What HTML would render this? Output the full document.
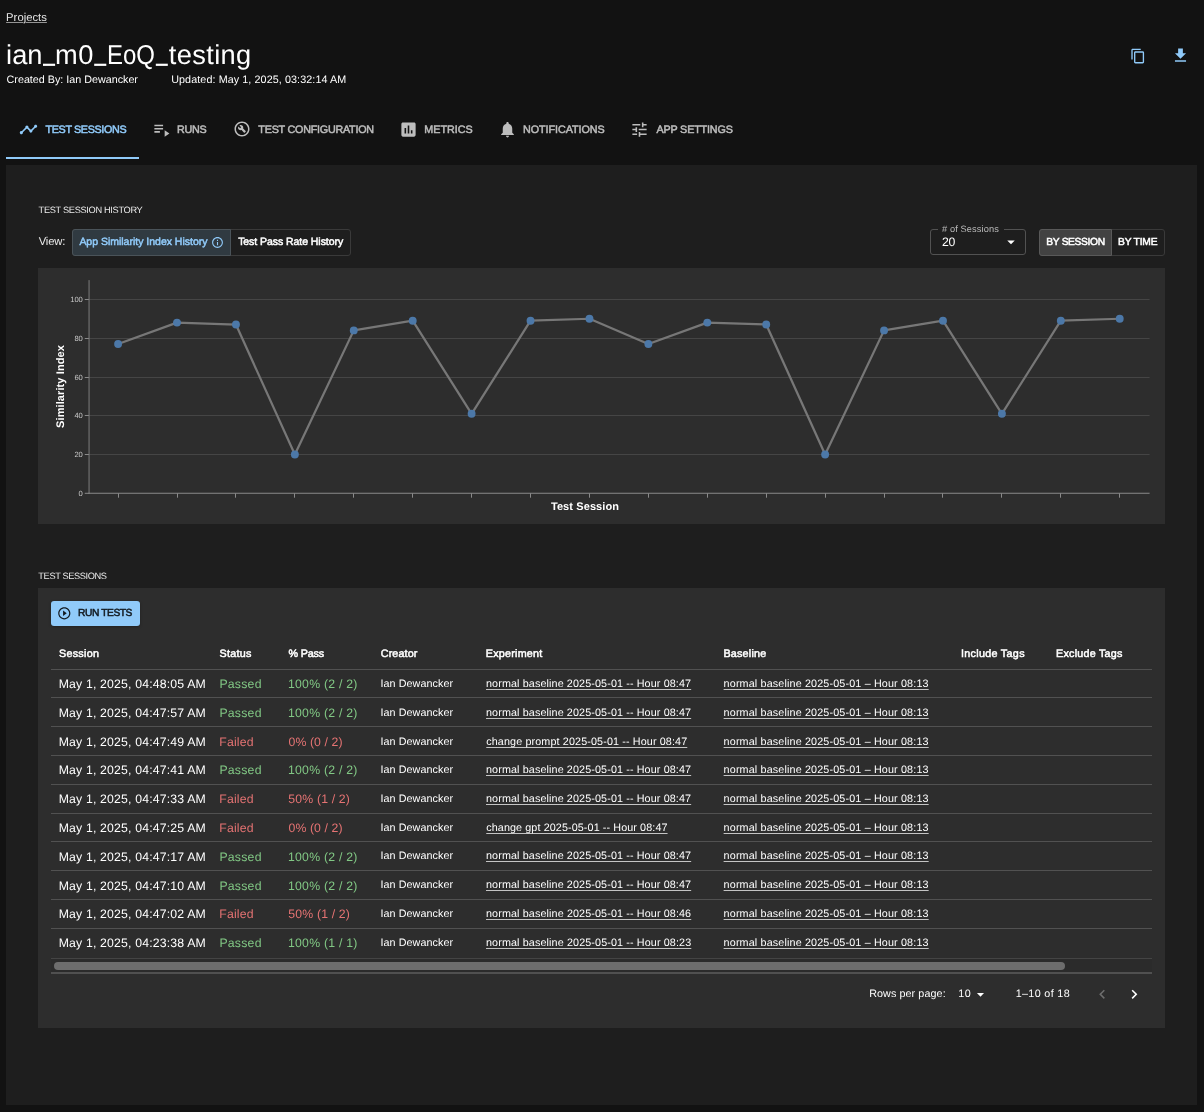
<!DOCTYPE html>
<html lang="en">
<head>
<meta charset="utf-8">
<title>ian_m0_EoQ_testing - Test Sessions</title>
<style>
html,body{margin:0;padding:0;background:#121212;}
body{width:1204px;height:1112px;position:relative;overflow:hidden;font-family:"Liberation Sans",sans-serif;color:#fff;}
#app{position:absolute;left:0;top:0;width:1204px;height:1112px;will-change:transform;}
.abs{position:absolute;display:block;}
.t{position:absolute;white-space:pre;margin:0;font-weight:400;font-style:normal;font-family:"Liberation Sans",sans-serif;text-rendering:geometricPrecision;}
a.t{cursor:pointer;}
svg text{font-family:"Liberation Sans",sans-serif;text-rendering:geometricPrecision;}
</style>
</head>
<body>
<div id="app">
<header>
<svg class="abs" style="left:1129.7px;top:47.7px" width="16.1" height="16.1" viewBox="0 0 24 24"><path fill="#90caf9" d="M16 1H4c-1.1 0-2 .9-2 2v14h2V3h12V1zm3 4H8c-1.1 0-2 .9-2 2v14c0 1.1.9 2 2 2h11c1.1 0 2-.9 2-2V7c0-1.1-.9-2-2-2zm0 16H8V7h11v14z"/></svg>
<svg class="abs" style="left:1170.9px;top:45.7px" width="19" height="19" viewBox="0 0 24 24"><path fill="#90caf9" d="M19 9h-4V3H9v6H5l7 7 7-7zM5 18v2h14v-2H5z"/></svg>
<svg class="abs" style="left:0;top:60px" width="260" height="8" viewBox="0 60 260 8"><rect x="43.0" y="63.7" width="12.1" height="2.2" fill="#fff"/><rect x="94.2" y="63.7" width="12.1" height="2.2" fill="#fff"/><rect x="155.8" y="63.7" width="12.0" height="2.2" fill="#fff"/></svg>
<a class="t" style="left:6.08px;top:10px;font-size:11.25px;line-height:16px;letter-spacing:0.025px;color:#e6e6e6;text-decoration:underline;text-underline-offset:0.5px;text-decoration-thickness:1px;text-decoration-color:rgba(255,255,255,.55);">Projects</a>
<b class="t" style="left:6.05px;top:36px;font-size:27.25px;line-height:38px;letter-spacing:0.045px;color:#ffffff;">ian</b>
<b class="t" style="left:55.1px;top:36px;font-size:27.25px;line-height:38px;letter-spacing:0.487px;color:#ffffff;">m0</b>
<b class="t" style="left:106.96px;top:36px;font-size:27.25px;line-height:38px;transform:scaleX(0.8803);transform-origin:0 0;color:#ffffff;">EoQ</b>
<b class="t" style="left:168.77px;top:36px;font-size:27.25px;line-height:38px;letter-spacing:0.370px;color:#ffffff;">testing</b>
<span class="t" style="left:6.59px;top:73px;font-size:10.75px;line-height:15px;letter-spacing:-0.004px;color:#ffffff;">Created By: Ian Dewancker</span>
<span class="t" style="left:171.2px;top:73px;font-size:10.75px;line-height:15px;letter-spacing:0.092px;color:#ffffff;">Updated: May 1, 2025, 03:32:14 AM</span>
</header>
<nav>
<div class="abs" style="left:6px;top:157px;width:133px;height:2px;background:#90caf9"></div>
<svg class="abs" style="left:19.1px;top:120.1px" width="19" height="19" viewBox="0 0 24 24"><path fill="#90caf9" d="M23 8c0 1.1-.9 2-2 2-.18 0-.35-.02-.51-.07l-3.56 3.55c.05.16.07.34.07.52 0 1.1-.9 2-2 2s-2-.9-2-2c0-.18.02-.36.07-.52l-2.55-2.55c-.16.05-.34.07-.52.07s-.36-.02-.52-.07l-4.55 4.56c.05.16.07.33.07.51 0 1.1-.9 2-2 2s-2-.9-2-2 .9-2 2-2c.18 0 .35.02.51.07l4.56-4.55C8.02 9.36 8 9.18 8 9c0-1.1.9-2 2-2s2 .9 2 2c0 .18-.02.36-.07.52l2.55 2.55c.16-.05.34-.07.52-.07s.36.02.52.07l3.55-3.56C19.02 8.35 19 8.18 19 8c0-1.1.9-2 2-2s2 .9 2 2z"/></svg>
<svg class="abs" style="left:152.4px;top:119.8px" width="19" height="19" viewBox="0 0 24 24"><path fill="#bdbdbd" d="M3 10h11v2H3zm0-4h11v2H3zm0 8h7v2H3zm13-1v8l6-4z"/></svg>
<svg class="abs" style="left:233px;top:120.4px" width="18" height="18" viewBox="0 0 24 24"><path fill="#bdbdbd" d="M12 2C6.48 2 2 6.48 2 12s4.48 10 10 10 10-4.48 10-10S17.52 2 12 2zm0 18c-4.41 0-8-3.59-8-8s3.59-8 8-8 8 3.59 8 8-3.59 8-8 8zM13.49 11.38c.43-1.22.17-2.64-.81-3.62-1.11-1.11-2.79-1.3-4.1-.59l2.35 2.35-1.41 1.41-2.35-2.35c-.71 1.32-.52 2.99.59 4.1.98.98 2.4 1.24 3.62.81l3.41 3.41c.2.2.51.2.71 0l1.4-1.4c.2-.2.2-.51 0-.71l-3.41-3.41z"/></svg>
<svg class="abs" style="left:398.9px;top:119.9px" width="19" height="19" viewBox="0 0 24 24"><path fill="#bdbdbd" d="M19 3H5c-1.1 0-2 .9-2 2v14c0 1.1.9 2 2 2h14c1.1 0 2-.9 2-2V5c0-1.1-.9-2-2-2zM9 17H7v-7h2v7zm4 0h-2V7h2v10zm4 0h-2v-4h2v4z"/></svg>
<svg class="abs" style="left:497.9px;top:120.1px" width="19" height="19" viewBox="0 0 24 24"><path fill="#bdbdbd" d="M12 22c1.1 0 2-.9 2-2h-4c0 1.1.89 2 2 2zm6-6v-5c0-3.07-1.64-5.64-4.5-6.32V4c0-.83-.67-1.5-1.5-1.5s-1.5.67-1.5 1.5v.68C7.63 5.36 6 7.92 6 11v5l-2 2v1h16v-1l-2-2z"/></svg>
<svg class="abs" style="left:629.9px;top:120.2px" width="19" height="19" viewBox="0 0 24 24"><path fill="#bdbdbd" d="M3 17v2h6v-2H3zM3 5v2h10V5H3zm10 16v-2h8v-2h-8v-2h-2v6h2zM7 9v2H3v2h4v2h2V9H7zm14 4v-2H11v2h10zm-6-4h2V7h4V5h-4V3h-2v6z"/></svg>
<span class="t" style="left:45.53px;top:123px;font-size:10.75px;line-height:15px;letter-spacing:-0.349px;color:#90caf9;-webkit-text-stroke:0.5px currentColor;">TEST SESSIONS</span>
<span class="t" style="left:177.08px;top:123px;font-size:10.75px;line-height:15px;letter-spacing:-0.277px;color:#bdbdbd;-webkit-text-stroke:0.5px currentColor;">RUNS</span>
<span class="t" style="left:258.37px;top:123px;font-size:10.75px;line-height:15px;letter-spacing:-0.231px;color:#bdbdbd;-webkit-text-stroke:0.5px currentColor;">TEST CONFIGURATION</span>
<span class="t" style="left:424.33px;top:123px;font-size:10.75px;line-height:15px;letter-spacing:-0.022px;color:#bdbdbd;-webkit-text-stroke:0.5px currentColor;">METRICS</span>
<span class="t" style="left:523px;top:123px;font-size:10.75px;line-height:15px;letter-spacing:-0.041px;color:#bdbdbd;-webkit-text-stroke:0.5px currentColor;">NOTIFICATIONS</span>
<span class="t" style="left:656.43px;top:123px;font-size:10.75px;line-height:15px;letter-spacing:-0.150px;color:#bdbdbd;-webkit-text-stroke:0.5px currentColor;">APP SETTINGS</span>
</nav>
<main>
<div class="abs" style="left:6px;top:165px;width:1191px;height:940px;background:#1e1e1e"></div>
<section id="test-session-history">
<div class="abs" style="left:72px;top:229px;width:279px;height:27px;border:1px solid #3a3a3a;border-radius:3px;box-sizing:border-box"></div>
<div class="abs" style="left:72px;top:229px;width:159px;height:27px;background:#303a41;border:1px solid #4a5359;border-radius:3px 0 0 3px;box-sizing:border-box"></div>
<div class="abs" style="left:930px;top:229px;width:96px;height:26px;border:1px solid #525252;border-radius:3px;box-sizing:border-box"></div>
<div class="abs" style="left:938px;top:228px;width:66px;height:4px;background:#1e1e1e"></div>
<div class="abs" style="left:1039px;top:229px;width:126px;height:27px;border:1px solid #3a3a3a;border-radius:3px;box-sizing:border-box"></div>
<div class="abs" style="left:1039px;top:229px;width:73px;height:27px;background:#424242;border:1px solid #595959;border-radius:3px 0 0 3px;box-sizing:border-box"></div>
<div class="abs" style="left:38px;top:268px;width:1127px;height:256px;background:#2d2d2d"></div>
<svg class="abs" style="left:0;top:0" width="1204" height="540" viewBox="0 0 1204 540">
<line x1="84.75" x2="89.05" y1="493.3" y2="493.3" stroke="#8a8a8a" stroke-width="1"/>
<text x="82.85" y="495.95" text-anchor="end" font-size="7.6" fill="#c8c8c8">0</text>
<line x1="89.05" x2="1149.6" y1="454.5" y2="454.5" stroke="#454545" stroke-width="1"/>
<line x1="84.75" x2="89.05" y1="454.5" y2="454.5" stroke="#8a8a8a" stroke-width="1"/>
<text x="82.85" y="457.15" text-anchor="end" font-size="7.6" fill="#c8c8c8">20</text>
<line x1="89.05" x2="1149.6" y1="415.5" y2="415.5" stroke="#454545" stroke-width="1"/>
<line x1="84.75" x2="89.05" y1="415.5" y2="415.5" stroke="#8a8a8a" stroke-width="1"/>
<text x="82.85" y="418.15" text-anchor="end" font-size="7.6" fill="#c8c8c8">40</text>
<line x1="89.05" x2="1149.6" y1="377.5" y2="377.5" stroke="#454545" stroke-width="1"/>
<line x1="84.75" x2="89.05" y1="377.5" y2="377.5" stroke="#8a8a8a" stroke-width="1"/>
<text x="82.85" y="380.15" text-anchor="end" font-size="7.6" fill="#c8c8c8">60</text>
<line x1="89.05" x2="1149.6" y1="338.5" y2="338.5" stroke="#454545" stroke-width="1"/>
<line x1="84.75" x2="89.05" y1="338.5" y2="338.5" stroke="#8a8a8a" stroke-width="1"/>
<text x="82.85" y="341.15" text-anchor="end" font-size="7.6" fill="#c8c8c8">80</text>
<line x1="89.05" x2="1149.6" y1="299.5" y2="299.5" stroke="#454545" stroke-width="1"/>
<line x1="84.75" x2="89.05" y1="299.5" y2="299.5" stroke="#8a8a8a" stroke-width="1"/>
<text x="82.85" y="302.15" text-anchor="end" font-size="7.6" fill="#c8c8c8">100</text>
<line x1="89.05" x2="89.05" y1="280.1" y2="493.8" stroke="#7c7c7c" stroke-width="1"/>
<line x1="88.55" x2="1149.6" y1="493.3" y2="493.3" stroke="#8a8a8a" stroke-width="1.1"/>
<line x1="118.5" x2="118.5" y1="493.3" y2="497.7" stroke="#8a8a8a" stroke-width="1"/>
<line x1="177.5" x2="177.5" y1="493.3" y2="497.7" stroke="#8a8a8a" stroke-width="1"/>
<line x1="235.5" x2="235.5" y1="493.3" y2="497.7" stroke="#8a8a8a" stroke-width="1"/>
<line x1="294.5" x2="294.5" y1="493.3" y2="497.7" stroke="#8a8a8a" stroke-width="1"/>
<line x1="353.5" x2="353.5" y1="493.3" y2="497.7" stroke="#8a8a8a" stroke-width="1"/>
<line x1="412.5" x2="412.5" y1="493.3" y2="497.7" stroke="#8a8a8a" stroke-width="1"/>
<line x1="471.5" x2="471.5" y1="493.3" y2="497.7" stroke="#8a8a8a" stroke-width="1"/>
<line x1="530.5" x2="530.5" y1="493.3" y2="497.7" stroke="#8a8a8a" stroke-width="1"/>
<line x1="589.5" x2="589.5" y1="493.3" y2="497.7" stroke="#8a8a8a" stroke-width="1"/>
<line x1="648.5" x2="648.5" y1="493.3" y2="497.7" stroke="#8a8a8a" stroke-width="1"/>
<line x1="707.5" x2="707.5" y1="493.3" y2="497.7" stroke="#8a8a8a" stroke-width="1"/>
<line x1="766.5" x2="766.5" y1="493.3" y2="497.7" stroke="#8a8a8a" stroke-width="1"/>
<line x1="825.5" x2="825.5" y1="493.3" y2="497.7" stroke="#8a8a8a" stroke-width="1"/>
<line x1="884.5" x2="884.5" y1="493.3" y2="497.7" stroke="#8a8a8a" stroke-width="1"/>
<line x1="942.5" x2="942.5" y1="493.3" y2="497.7" stroke="#8a8a8a" stroke-width="1"/>
<line x1="1001.5" x2="1001.5" y1="493.3" y2="497.7" stroke="#8a8a8a" stroke-width="1"/>
<line x1="1060.5" x2="1060.5" y1="493.3" y2="497.7" stroke="#8a8a8a" stroke-width="1"/>
<line x1="1119.5" x2="1119.5" y1="493.3" y2="497.7" stroke="#8a8a8a" stroke-width="1"/>
<polyline fill="none" stroke="#777777" stroke-width="2.25" stroke-linejoin="round" points="118.10,343.96 177.02,322.62 235.94,324.56 294.86,454.51 353.78,330.38 412.70,320.68 471.62,413.78 530.54,320.68 589.46,318.75 648.38,343.96 707.30,322.62 766.22,324.56 825.14,454.51 884.06,330.38 942.98,320.68 1001.90,413.78 1060.82,320.68 1119.74,318.75"/>
<circle cx="118.10" cy="343.96" r="3.95" fill="#4c78a8"/>
<circle cx="177.02" cy="322.62" r="3.95" fill="#4c78a8"/>
<circle cx="235.94" cy="324.56" r="3.95" fill="#4c78a8"/>
<circle cx="294.86" cy="454.51" r="3.95" fill="#4c78a8"/>
<circle cx="353.78" cy="330.38" r="3.95" fill="#4c78a8"/>
<circle cx="412.70" cy="320.68" r="3.95" fill="#4c78a8"/>
<circle cx="471.62" cy="413.78" r="3.95" fill="#4c78a8"/>
<circle cx="530.54" cy="320.68" r="3.95" fill="#4c78a8"/>
<circle cx="589.46" cy="318.75" r="3.95" fill="#4c78a8"/>
<circle cx="648.38" cy="343.96" r="3.95" fill="#4c78a8"/>
<circle cx="707.30" cy="322.62" r="3.95" fill="#4c78a8"/>
<circle cx="766.22" cy="324.56" r="3.95" fill="#4c78a8"/>
<circle cx="825.14" cy="454.51" r="3.95" fill="#4c78a8"/>
<circle cx="884.06" cy="330.38" r="3.95" fill="#4c78a8"/>
<circle cx="942.98" cy="320.68" r="3.95" fill="#4c78a8"/>
<circle cx="1001.90" cy="413.78" r="3.95" fill="#4c78a8"/>
<circle cx="1060.82" cy="320.68" r="3.95" fill="#4c78a8"/>
<circle cx="1119.74" cy="318.75" r="3.95" fill="#4c78a8"/>
<text x="585" y="510" text-anchor="middle" font-size="11" font-weight="700" letter-spacing="0.1" fill="#ffffff">Test Session</text>
<text transform="translate(64.3,386.5) rotate(-90)" text-anchor="middle" font-size="11" font-weight="700" letter-spacing="0.1" fill="#ffffff">Similarity Index</text>
</svg>
<svg class="abs" style="left:211px;top:235.7px" width="13" height="13" viewBox="0 0 24 24"><path fill="#90caf9" d="M11 7h2v2h-2zm0 4h2v6h-2zm1-9C6.48 2 2 6.48 2 12s4.48 10 10 10 10-4.48 10-10S17.52 2 12 2zm0 18c-4.41 0-8-3.59-8-8s3.59-8 8-8 8 3.59 8 8-3.59 8-8 8z"/></svg>
<svg class="abs" style="left:1002px;top:233.25px" width="18" height="18" viewBox="0 0 24 24"><path fill="#ffffff" d="M7 10l5 5 5-5z"/></svg>
<span class="t" style="left:38.61px;top:204px;font-size:9.25px;line-height:13px;letter-spacing:-0.334px;color:#ececec;">TEST SESSION HISTORY</span>
<span class="t" style="left:38.73px;top:234px;font-size:11.25px;line-height:16px;letter-spacing:-0.155px;color:#ececec;">View:</span>
<span class="t" style="left:79.39px;top:235px;font-size:10.5px;line-height:15px;letter-spacing:-0.011px;color:#90caf9;-webkit-text-stroke:0.5px currentColor;">App Similarity Index History</span>
<span class="t" style="left:238.13px;top:235px;font-size:10.5px;line-height:15px;letter-spacing:-0.055px;color:#ffffff;-webkit-text-stroke:0.5px currentColor;">Test Pass Rate History</span>
<span class="t" style="left:941.97px;top:223px;font-size:9.25px;line-height:13px;letter-spacing:0.117px;color:#bcbcbc;"># of Sessions</span>
<span class="t" style="left:941.97px;top:234px;font-size:12.25px;line-height:17px;letter-spacing:-0.402px;color:#ffffff;">20</span>
<span class="t" style="left:1046.37px;top:236px;font-size:10.25px;line-height:14px;letter-spacing:-0.356px;color:#ffffff;-webkit-text-stroke:0.5px currentColor;">BY SESSION</span>
<span class="t" style="left:1118px;top:236px;font-size:10.25px;line-height:14px;letter-spacing:-0.186px;color:#ffffff;-webkit-text-stroke:0.5px currentColor;">BY TIME</span>
</section>
<section id="test-sessions">
<div class="abs" style="left:38px;top:588px;width:1127px;height:440px;background:#2d2d2d"></div>
<div class="abs" style="left:51px;top:601px;width:89px;height:25px;background:#90caf9;border-radius:3px;box-shadow:0 1px 3px rgba(0,0,0,.3)"></div>
<div class="abs" style="left:51px;top:669px;width:1101px;height:1px;background:#515151"></div>
<div class="abs" style="left:51px;top:697px;width:1101px;height:1px;background:#515151"></div>
<div class="abs" style="left:51px;top:726px;width:1101px;height:1px;background:#515151"></div>
<div class="abs" style="left:51px;top:755px;width:1101px;height:1px;background:#515151"></div>
<div class="abs" style="left:51px;top:784px;width:1101px;height:1px;background:#515151"></div>
<div class="abs" style="left:51px;top:813px;width:1101px;height:1px;background:#515151"></div>
<div class="abs" style="left:51px;top:841px;width:1101px;height:1px;background:#515151"></div>
<div class="abs" style="left:51px;top:870px;width:1101px;height:1px;background:#515151"></div>
<div class="abs" style="left:51px;top:899px;width:1101px;height:1px;background:#515151"></div>
<div class="abs" style="left:51px;top:928px;width:1101px;height:1px;background:#515151"></div>
<div class="abs" style="left:51px;top:958px;width:1101px;height:1px;background:#444444"></div>
<div class="abs" style="left:51px;top:959px;width:1101px;height:13px;background:#2b2b2b"></div>
<div class="abs" style="left:54px;top:962px;width:1011px;height:8px;background:#6d6d6d;border-radius:4px"></div>
<div class="abs" style="left:51px;top:972px;width:1101px;height:2px;background:#505050"></div>
<svg class="abs" style="left:56.8px;top:605.8px" width="14.6" height="14.6" viewBox="0 0 24 24"><path fill="#131a20" d="M10 16.5l6-4.5-6-4.5v9zM12 2C6.48 2 2 6.48 2 12s4.48 10 10 10 10-4.48 10-10S17.52 2 12 2zm0 18c-4.41 0-8-3.59-8-8s3.59-8 8-8 8 3.59 8 8-3.59 8-8 8z"/></svg>
<svg class="abs" style="left:972.4px;top:985.8px" width="17" height="17" viewBox="0 0 24 24"><path fill="#ffffff" d="M7 10l5 5 5-5z"/></svg>
<svg class="abs" style="left:1092.85px;top:985.05px" width="18.5" height="18.5" viewBox="0 0 24 24"><path fill="#6e6e6e" d="M15.41 7.41L14 6l-6 6 6 6 1.41-1.41L10.83 12z"/></svg>
<svg class="abs" style="left:1125.35px;top:985.05px" width="18.5" height="18.5" viewBox="0 0 24 24"><path fill="#ffffff" d="M10 6L8.59 7.41 13.17 12l-4.58 4.59L10 18l6-6z"/></svg>
<span class="t" style="left:38.35px;top:570px;font-size:9.25px;line-height:13px;letter-spacing:-0.389px;color:#ececec;">TEST SESSIONS</span>
<span class="t" style="left:78.11px;top:607px;font-size:10.25px;line-height:14px;letter-spacing:-0.444px;color:#131a20;-webkit-text-stroke:0.5px currentColor;">RUN TESTS</span>
<span class="t" style="left:58.94px;top:647px;font-size:10.75px;line-height:15px;letter-spacing:0.286px;color:#ffffff;-webkit-text-stroke:0.5px currentColor;">Session</span>
<span class="t" style="left:219.52px;top:647px;font-size:10.75px;line-height:15px;letter-spacing:0.266px;color:#ffffff;-webkit-text-stroke:0.5px currentColor;">Status</span>
<span class="t" style="left:288.49px;top:647px;font-size:10.75px;line-height:15px;letter-spacing:-0.146px;color:#ffffff;-webkit-text-stroke:0.5px currentColor;">% Pass</span>
<span class="t" style="left:380.72px;top:647px;font-size:10.75px;line-height:15px;letter-spacing:0.143px;color:#ffffff;-webkit-text-stroke:0.5px currentColor;">Creator</span>
<span class="t" style="left:485.86px;top:647px;font-size:10.75px;line-height:15px;letter-spacing:0.216px;color:#ffffff;-webkit-text-stroke:0.5px currentColor;">Experiment</span>
<span class="t" style="left:723.38px;top:647px;font-size:10.75px;line-height:15px;letter-spacing:0.241px;color:#ffffff;-webkit-text-stroke:0.5px currentColor;">Baseline</span>
<span class="t" style="left:960.92px;top:647px;font-size:10.75px;line-height:15px;letter-spacing:0.312px;color:#ffffff;-webkit-text-stroke:0.5px currentColor;">Include Tags</span>
<span class="t" style="left:1056.08px;top:647px;font-size:10.75px;line-height:15px;letter-spacing:0.223px;color:#ffffff;-webkit-text-stroke:0.5px currentColor;">Exclude Tags</span>
<span class="t" style="left:58.74px;top:676px;font-size:12.25px;line-height:17px;letter-spacing:0.174px;color:#ffffff;">May 1, 2025, 04:48:05 AM</span>
<span class="t" style="left:219.4px;top:676px;font-size:12.25px;line-height:17px;letter-spacing:0.243px;color:#81c784;">Passed</span>
<span class="t" style="left:288px;top:676px;font-size:12.25px;line-height:17px;letter-spacing:0.231px;color:#81c784;">100% (2 / 2)</span>
<span class="t" style="left:380.51px;top:677px;font-size:10.75px;line-height:15px;letter-spacing:0.069px;color:#ffffff;">Ian Dewancker</span>
<a class="t" style="left:486px;top:677px;font-size:10.75px;line-height:15px;letter-spacing:0.124px;color:#ffffff;text-decoration:underline;text-underline-offset:1.5px;text-decoration-thickness:1px;text-decoration-color:rgba(255,255,255,.72);">normal baseline 2025-05-01 -- Hour 08:47</a>
<a class="t" style="left:723.61px;top:677px;font-size:10.75px;line-height:15px;letter-spacing:0.155px;color:#ffffff;text-decoration:underline;text-underline-offset:1.5px;text-decoration-thickness:1px;text-decoration-color:rgba(255,255,255,.72);">normal baseline 2025-05-01 – Hour 08:13</a>
<span class="t" style="left:58.74px;top:705px;font-size:12.25px;line-height:17px;letter-spacing:0.174px;color:#ffffff;">May 1, 2025, 04:47:57 AM</span>
<span class="t" style="left:219.4px;top:705px;font-size:12.25px;line-height:17px;letter-spacing:0.243px;color:#81c784;">Passed</span>
<span class="t" style="left:288px;top:705px;font-size:12.25px;line-height:17px;letter-spacing:0.231px;color:#81c784;">100% (2 / 2)</span>
<span class="t" style="left:380.51px;top:706px;font-size:10.75px;line-height:15px;letter-spacing:0.069px;color:#ffffff;">Ian Dewancker</span>
<a class="t" style="left:486px;top:706px;font-size:10.75px;line-height:15px;letter-spacing:0.124px;color:#ffffff;text-decoration:underline;text-underline-offset:1.5px;text-decoration-thickness:1px;text-decoration-color:rgba(255,255,255,.72);">normal baseline 2025-05-01 -- Hour 08:47</a>
<a class="t" style="left:723.61px;top:706px;font-size:10.75px;line-height:15px;letter-spacing:0.155px;color:#ffffff;text-decoration:underline;text-underline-offset:1.5px;text-decoration-thickness:1px;text-decoration-color:rgba(255,255,255,.72);">normal baseline 2025-05-01 – Hour 08:13</a>
<span class="t" style="left:58.74px;top:734px;font-size:12.25px;line-height:17px;letter-spacing:0.174px;color:#ffffff;">May 1, 2025, 04:47:49 AM</span>
<span class="t" style="left:219.36px;top:734px;font-size:12.25px;line-height:17px;letter-spacing:0.160px;color:#e57373;">Failed</span>
<span class="t" style="left:288.5px;top:734px;font-size:12.25px;line-height:17px;letter-spacing:0.099px;color:#e57373;">0% (0 / 2)</span>
<span class="t" style="left:380.51px;top:735px;font-size:10.75px;line-height:15px;letter-spacing:0.069px;color:#ffffff;">Ian Dewancker</span>
<a class="t" style="left:486.25px;top:735px;font-size:10.75px;line-height:15px;letter-spacing:0.132px;color:#ffffff;text-decoration:underline;text-underline-offset:1.5px;text-decoration-thickness:1px;text-decoration-color:rgba(255,255,255,.72);">change prompt 2025-05-01 -- Hour 08:47</a>
<a class="t" style="left:723.61px;top:735px;font-size:10.75px;line-height:15px;letter-spacing:0.155px;color:#ffffff;text-decoration:underline;text-underline-offset:1.5px;text-decoration-thickness:1px;text-decoration-color:rgba(255,255,255,.72);">normal baseline 2025-05-01 – Hour 08:13</a>
<span class="t" style="left:58.74px;top:762px;font-size:12.25px;line-height:17px;letter-spacing:0.174px;color:#ffffff;">May 1, 2025, 04:47:41 AM</span>
<span class="t" style="left:219.4px;top:762px;font-size:12.25px;line-height:17px;letter-spacing:0.243px;color:#81c784;">Passed</span>
<span class="t" style="left:288px;top:762px;font-size:12.25px;line-height:17px;letter-spacing:0.231px;color:#81c784;">100% (2 / 2)</span>
<span class="t" style="left:380.51px;top:763px;font-size:10.75px;line-height:15px;letter-spacing:0.069px;color:#ffffff;">Ian Dewancker</span>
<a class="t" style="left:486px;top:763px;font-size:10.75px;line-height:15px;letter-spacing:0.124px;color:#ffffff;text-decoration:underline;text-underline-offset:1.5px;text-decoration-thickness:1px;text-decoration-color:rgba(255,255,255,.72);">normal baseline 2025-05-01 -- Hour 08:47</a>
<a class="t" style="left:723.61px;top:763px;font-size:10.75px;line-height:15px;letter-spacing:0.155px;color:#ffffff;text-decoration:underline;text-underline-offset:1.5px;text-decoration-thickness:1px;text-decoration-color:rgba(255,255,255,.72);">normal baseline 2025-05-01 – Hour 08:13</a>
<span class="t" style="left:58.74px;top:791px;font-size:12.25px;line-height:17px;letter-spacing:0.174px;color:#ffffff;">May 1, 2025, 04:47:33 AM</span>
<span class="t" style="left:219.36px;top:791px;font-size:12.25px;line-height:17px;letter-spacing:0.160px;color:#e57373;">Failed</span>
<span class="t" style="left:288.27px;top:791px;font-size:12.25px;line-height:17px;letter-spacing:0.176px;color:#e57373;">50% (1 / 2)</span>
<span class="t" style="left:380.51px;top:792px;font-size:10.75px;line-height:15px;letter-spacing:0.069px;color:#ffffff;">Ian Dewancker</span>
<a class="t" style="left:486px;top:792px;font-size:10.75px;line-height:15px;letter-spacing:0.124px;color:#ffffff;text-decoration:underline;text-underline-offset:1.5px;text-decoration-thickness:1px;text-decoration-color:rgba(255,255,255,.72);">normal baseline 2025-05-01 -- Hour 08:47</a>
<a class="t" style="left:723.61px;top:792px;font-size:10.75px;line-height:15px;letter-spacing:0.155px;color:#ffffff;text-decoration:underline;text-underline-offset:1.5px;text-decoration-thickness:1px;text-decoration-color:rgba(255,255,255,.72);">normal baseline 2025-05-01 – Hour 08:13</a>
<span class="t" style="left:58.74px;top:820px;font-size:12.25px;line-height:17px;letter-spacing:0.174px;color:#ffffff;">May 1, 2025, 04:47:25 AM</span>
<span class="t" style="left:219.36px;top:820px;font-size:12.25px;line-height:17px;letter-spacing:0.160px;color:#e57373;">Failed</span>
<span class="t" style="left:288.5px;top:820px;font-size:12.25px;line-height:17px;letter-spacing:0.099px;color:#e57373;">0% (0 / 2)</span>
<span class="t" style="left:380.51px;top:821px;font-size:10.75px;line-height:15px;letter-spacing:0.069px;color:#ffffff;">Ian Dewancker</span>
<a class="t" style="left:486.26px;top:821px;font-size:10.75px;line-height:15px;letter-spacing:0.109px;color:#ffffff;text-decoration:underline;text-underline-offset:1.5px;text-decoration-thickness:1px;text-decoration-color:rgba(255,255,255,.72);">change gpt 2025-05-01 -- Hour 08:47</a>
<a class="t" style="left:723.61px;top:821px;font-size:10.75px;line-height:15px;letter-spacing:0.155px;color:#ffffff;text-decoration:underline;text-underline-offset:1.5px;text-decoration-thickness:1px;text-decoration-color:rgba(255,255,255,.72);">normal baseline 2025-05-01 – Hour 08:13</a>
<span class="t" style="left:58.74px;top:849px;font-size:12.25px;line-height:17px;letter-spacing:0.174px;color:#ffffff;">May 1, 2025, 04:47:17 AM</span>
<span class="t" style="left:219.4px;top:849px;font-size:12.25px;line-height:17px;letter-spacing:0.243px;color:#81c784;">Passed</span>
<span class="t" style="left:288px;top:849px;font-size:12.25px;line-height:17px;letter-spacing:0.231px;color:#81c784;">100% (2 / 2)</span>
<span class="t" style="left:380.51px;top:849px;font-size:10.75px;line-height:15px;letter-spacing:0.069px;color:#ffffff;">Ian Dewancker</span>
<a class="t" style="left:486px;top:849px;font-size:10.75px;line-height:15px;letter-spacing:0.124px;color:#ffffff;text-decoration:underline;text-underline-offset:1.5px;text-decoration-thickness:1px;text-decoration-color:rgba(255,255,255,.72);">normal baseline 2025-05-01 -- Hour 08:47</a>
<a class="t" style="left:723.61px;top:849px;font-size:10.75px;line-height:15px;letter-spacing:0.155px;color:#ffffff;text-decoration:underline;text-underline-offset:1.5px;text-decoration-thickness:1px;text-decoration-color:rgba(255,255,255,.72);">normal baseline 2025-05-01 – Hour 08:13</a>
<span class="t" style="left:58.74px;top:878px;font-size:12.25px;line-height:17px;letter-spacing:0.174px;color:#ffffff;">May 1, 2025, 04:47:10 AM</span>
<span class="t" style="left:219.4px;top:878px;font-size:12.25px;line-height:17px;letter-spacing:0.243px;color:#81c784;">Passed</span>
<span class="t" style="left:288px;top:878px;font-size:12.25px;line-height:17px;letter-spacing:0.231px;color:#81c784;">100% (2 / 2)</span>
<span class="t" style="left:380.51px;top:878px;font-size:10.75px;line-height:15px;letter-spacing:0.069px;color:#ffffff;">Ian Dewancker</span>
<a class="t" style="left:486px;top:878px;font-size:10.75px;line-height:15px;letter-spacing:0.124px;color:#ffffff;text-decoration:underline;text-underline-offset:1.5px;text-decoration-thickness:1px;text-decoration-color:rgba(255,255,255,.72);">normal baseline 2025-05-01 -- Hour 08:47</a>
<a class="t" style="left:723.61px;top:878px;font-size:10.75px;line-height:15px;letter-spacing:0.155px;color:#ffffff;text-decoration:underline;text-underline-offset:1.5px;text-decoration-thickness:1px;text-decoration-color:rgba(255,255,255,.72);">normal baseline 2025-05-01 – Hour 08:13</a>
<span class="t" style="left:58.74px;top:906px;font-size:12.25px;line-height:17px;letter-spacing:0.174px;color:#ffffff;">May 1, 2025, 04:47:02 AM</span>
<span class="t" style="left:219.36px;top:906px;font-size:12.25px;line-height:17px;letter-spacing:0.160px;color:#e57373;">Failed</span>
<span class="t" style="left:288.27px;top:906px;font-size:12.25px;line-height:17px;letter-spacing:0.176px;color:#e57373;">50% (1 / 2)</span>
<span class="t" style="left:380.51px;top:907px;font-size:10.75px;line-height:15px;letter-spacing:0.069px;color:#ffffff;">Ian Dewancker</span>
<a class="t" style="left:486px;top:907px;font-size:10.75px;line-height:15px;letter-spacing:0.126px;color:#ffffff;text-decoration:underline;text-underline-offset:1.5px;text-decoration-thickness:1px;text-decoration-color:rgba(255,255,255,.72);">normal baseline 2025-05-01 -- Hour 08:46</a>
<a class="t" style="left:723.61px;top:907px;font-size:10.75px;line-height:15px;letter-spacing:0.155px;color:#ffffff;text-decoration:underline;text-underline-offset:1.5px;text-decoration-thickness:1px;text-decoration-color:rgba(255,255,255,.72);">normal baseline 2025-05-01 – Hour 08:13</a>
<span class="t" style="left:58.74px;top:935px;font-size:12.25px;line-height:17px;letter-spacing:0.174px;color:#ffffff;">May 1, 2025, 04:23:38 AM</span>
<span class="t" style="left:219.4px;top:935px;font-size:12.25px;line-height:17px;letter-spacing:0.243px;color:#81c784;">Passed</span>
<span class="t" style="left:288px;top:935px;font-size:12.25px;line-height:17px;letter-spacing:0.231px;color:#81c784;">100% (1 / 1)</span>
<span class="t" style="left:380.51px;top:936px;font-size:10.75px;line-height:15px;letter-spacing:0.069px;color:#ffffff;">Ian Dewancker</span>
<a class="t" style="left:486px;top:936px;font-size:10.75px;line-height:15px;letter-spacing:0.128px;color:#ffffff;text-decoration:underline;text-underline-offset:1.5px;text-decoration-thickness:1px;text-decoration-color:rgba(255,255,255,.72);">normal baseline 2025-05-01 -- Hour 08:23</a>
<a class="t" style="left:723.61px;top:936px;font-size:10.75px;line-height:15px;letter-spacing:0.155px;color:#ffffff;text-decoration:underline;text-underline-offset:1.5px;text-decoration-thickness:1px;text-decoration-color:rgba(255,255,255,.72);">normal baseline 2025-05-01 – Hour 08:13</a>
<span class="t" style="left:869.14px;top:987px;font-size:10.75px;line-height:15px;letter-spacing:0.092px;color:#ffffff;">Rows per page:</span>
<span class="t" style="left:958.31px;top:987px;font-size:10.75px;line-height:15px;letter-spacing:0.405px;color:#ffffff;">10</span>
<span class="t" style="left:1015.63px;top:987px;font-size:10.75px;line-height:15px;letter-spacing:0.356px;color:#ffffff;">1–10 of 18</span>
</section>
</main>
</div>
</body>
</html>
